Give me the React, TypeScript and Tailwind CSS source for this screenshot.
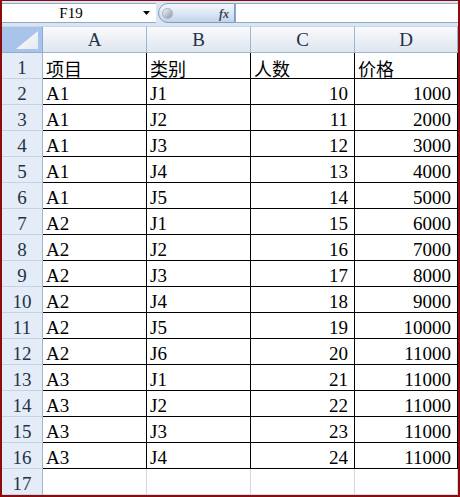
import React from "react";

type Row = [string, string, number, number];

const rows: Row[] = [
  ["A1", "J1", 10, 1000],
  ["A1", "J2", 11, 2000],
  ["A1", "J3", 12, 3000],
  ["A1", "J4", 13, 4000],
  ["A1", "J5", 14, 5000],
  ["A2", "J1", 15, 6000],
  ["A2", "J2", 16, 7000],
  ["A2", "J3", 17, 8000],
  ["A2", "J4", 18, 9000],
  ["A2", "J5", 19, 10000],
  ["A2", "J6", 20, 11000],
  ["A3", "J1", 21, 11000],
  ["A3", "J2", 22, 11000],
  ["A3", "J3", 23, 11000],
  ["A3", "J4", 24, 11000],
];

const cjk = "[font-family:'Noto_Sans_CJK_SC',sans-serif]";

function RowHead({ n }: { n: number }) {
  return (
    <div className="h-[26px] w-[41px] shrink-0 bg-[#e4ecf7] border-r border-b border-r-[#9eb6ce] border-b-[#c3d2e5] flex items-end justify-center text-[19px] leading-[14px] text-[#1f3349] [font-family:'Liberation_Serif',serif]">
      <span className="pb-[3px]">{n}</span>
    </div>
  );
}

function Cell({
  children,
  w,
  right,
  dark,
}: {
  children?: React.ReactNode;
  w: string;
  right?: boolean;
  dark: boolean;
}) {
  const base =
    "h-[26px] shrink-0 border-r border-b flex items-end text-[19px] leading-[14px] text-black [font-family:'Liberation_Serif',serif] " +
    (dark ? "border-black " : "border-[#d0d7e5] ") +
    (right ? "justify-end pr-[6px] " : "justify-start pl-[3px] ") +
    w;
  return (
    <div className={base}>
      <span className="pb-[3px]">{children}</span>
    </div>
  );
}

function Header({ text }: { text: string }) {
  return (
    <span className={`${cjk} text-[18px] leading-[18px] relative top-[2px]`}>{text}</span>
  );
}

export default function App() {
  return (
    <div className="w-[460px] h-[497px] overflow-hidden bg-white border-l-2 border-r-2 border-b-2 border-t border-[#8c0c0c] flex flex-col">
      {/* formula bar */}
      <div className="h-[25px] shrink-0 bg-[#dbe5f2] pt-[2px] pb-[3px] flex">
        <div className="h-[20px] w-[154px] bg-white border-y border-[#8ea9cb] flex items-center">
          <div className="w-[138px] text-center text-[15px] leading-[14px] text-black [font-family:'Liberation_Serif',serif]">
            F19
          </div>
          <svg width="8" height="5" viewBox="0 0 8 5" className="ml-[3px]">
            <path d="M0 0 H7 L3.5 4 Z" fill="#000" />
          </svg>
        </div>
        <div className="h-[20px] w-[77px] ml-[2px] rounded-l-full border border-[#7f9dc4] bg-gradient-to-b from-[#f3f7fc] via-[#dce7f5] to-[#c2d3ea] flex items-center relative">
          <div className="ml-[3px] w-[11px] h-[11px] rounded-full bg-gradient-to-br from-[#f4f6f8] via-[#bfc6ce] to-[#8f98a3] border border-[#a6b1bd]" />
          <span className="absolute right-[5px] top-[1px] text-[12px] italic font-bold text-[#3a4654] [font-family:'Liberation_Serif',serif]">
            fx
          </span>
        </div>
        <div className="h-[20px] flex-1 bg-white border-y border-l border-[#8ea9cb]" />
      </div>

      {/* column headers */}
      <div className="h-[27px] shrink-0 flex">
        <div className="w-[41px] h-[27px] shrink-0 bg-[#a8c4ea] border-r border-b border-[#8fabd0] border-t border-t-[#c9d6e6] relative">
          <svg width="22" height="18" viewBox="0 0 22 18" className="absolute right-[4px] bottom-[3px]">
            <defs>
              <linearGradient id="tri" x1="0" y1="0" x2="1" y2="1">
                <stop offset="0" stopColor="#ffffff" />
                <stop offset="1" stopColor="#e3e9f1" />
              </linearGradient>
            </defs>
            <path d="M22 0 V18 H0 Z" fill="url(#tri)" />
          </svg>
        </div>
        {["A", "B", "C", "D"].map((c, i) => (
          <div
            key={c}
            className={
              "h-[27px] shrink-0 border-r border-b border-t border-r-[#9eb6ce] border-b-[#9eb6ce] border-t-[#c9d6e6] bg-gradient-to-b from-[#f9fafc] to-[#dfe6ef] flex items-end justify-center text-[19px] leading-[14px] text-[#1f3349] [font-family:'Liberation_Serif',serif] " +
              (i === 3 ? "w-[103px]" : "w-[104px]")
            }
          >
            <span className="pb-[5px]">{c}</span>
          </div>
        ))}
      </div>

      {/* sheet body */}
      <div className="flex flex-col">
        <div className="flex">
          <RowHead n={1} />
          <Cell w="w-[104px]" dark>
            <Header text="项目" />
          </Cell>
          <Cell w="w-[104px]" dark>
            <Header text="类别" />
          </Cell>
          <Cell w="w-[104px]" dark>
            <Header text="人数" />
          </Cell>
          <Cell w="w-[103px]" dark>
            <Header text="价格" />
          </Cell>
        </div>
        {rows.map((r, i) => (
          <div className="flex" key={i}>
            <RowHead n={i + 2} />
            <Cell w="w-[104px]" dark>
              {r[0]}
            </Cell>
            <Cell w="w-[104px]" dark>
              {r[1]}
            </Cell>
            <Cell w="w-[104px]" dark right>
              {r[2]}
            </Cell>
            <Cell w="w-[103px]" dark right>
              {r[3]}
            </Cell>
          </div>
        ))}
        <div className="flex">
          <RowHead n={17} />
          <Cell w="w-[104px]" dark={false} />
          <Cell w="w-[104px]" dark={false} />
          <Cell w="w-[104px]" dark={false} />
          <Cell w="w-[103px]" dark={false} />
        </div>
      </div>
    </div>
  );
}
